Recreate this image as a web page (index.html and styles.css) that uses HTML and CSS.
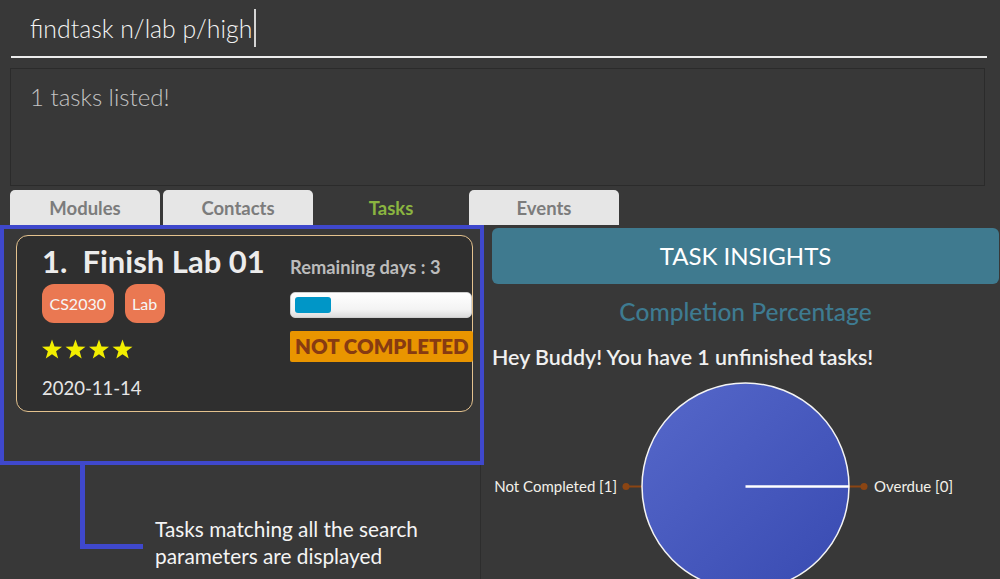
FILE: index.html
```html
<!DOCTYPE html>
<html lang="en">
<head>
<meta charset="utf-8">
<title>Task finder</title>
<link rel="stylesheet" href="styles.css">
</head>
<body>
<div class="app">
  <div class="command"><span class="cmd-text">findtask n/lab p/high</span><span class="caret"></span></div>
  <div class="result">1 tasks listed!</div>
  <nav class="tabs">
    <div class="tab">Modules</div>
    <div class="tab">Contacts</div>
    <div class="tab active">Tasks</div>
    <div class="tab">Events</div>
  </nav>
  <div class="main">
    <section class="list-pane">
      <article class="card">
        <div class="card-left">
          <h2 class="title">1.  Finish Lab 01</h2>
          <div class="tags"><span class="tag">CS2030</span><span class="tag">Lab</span></div>
          <svg class="stars" width="92" height="21" viewBox="0 0 92 21" aria-label="4 stars">
            <defs>
              <polygon id="star" points="10,0.5 12.5,7.5 20,7.8 14.1,12.3 16.2,19.5 10,15.3 3.8,19.5 5.9,12.3 0,7.8 7.5,7.5"/>
            </defs>
            <use href="#star" x="0" y="0"/>
            <use href="#star" x="23.5" y="0"/>
            <use href="#star" x="47" y="0"/>
            <use href="#star" x="70.5" y="0"/>
          </svg>
          <div class="date">2020-11-14</div>
        </div>
        <div class="card-right">
          <div class="remaining">Remaining days : 3</div>
          <div class="progress"><div class="progress-fill"></div></div>
          <div class="status">NOT COMPLETED</div>
        </div>
      </article>
      <div class="highlight"></div>
      <div class="callout-line"></div>
      <p class="callout-text">Tasks matching all the search<br>parameters are displayed</p>
    </section>
    <section class="insights">
      <div class="insights-header">TASK INSIGHTS</div>
      <h3 class="chart-title">Completion Percentage</h3>
      <p class="summary">Hey Buddy! You have 1 unfinished tasks!</p>
      <svg class="pie" width="507" height="209" viewBox="0 0 507 209">
        <defs>
          <linearGradient id="pieGrad" x1="0" y1="0" x2="1" y2="1">
            <stop offset="0" stop-color="#5668ca"/>
            <stop offset="1" stop-color="#384ab1"/>
          </linearGradient>
        </defs>
        <line x1="134" y1="116.5" x2="150" y2="116.5" stroke="#8b4513" stroke-width="2"/>
        <circle cx="134" cy="116.5" r="3.5" fill="#8b4513"/>
        <line x1="357" y1="116.5" x2="372" y2="116.5" stroke="#8b4513" stroke-width="2"/>
        <circle cx="372" cy="116.5" r="3.5" fill="#8b4513"/>
        <circle cx="253.5" cy="116.5" r="103.5" fill="url(#pieGrad)" stroke="#f4f4f4" stroke-width="1.5"/>
        <line x1="253.5" y1="116.5" x2="357" y2="116.5" stroke="#ffffff" stroke-width="2.5"/>
        <text class="pie-label" x="125" y="121.5" text-anchor="end">Not Completed [1]</text>
        <text class="pie-label" x="382" y="121.5">Overdue [0]</text>
      </svg>
    </section>
  </div>
</div>
</body>
</html>
```
FILE: styles.css
```css
* { box-sizing: border-box; }

html, body {
  margin: 0;
  padding: 0;
  width: 1000px;
  height: 579px;
  overflow: hidden;
  background: #383838;
  font-family: "Lato", "Noto Sans", sans-serif;
}

.app {
  display: flex;
  flex-direction: column;
  height: 579px;
}

.command {
  margin: 0 13px 0 11px;
  height: 58px;
  padding: 13px 0 0 19px;
  border-bottom: 2px solid #ececec;
  display: flex;
  align-items: flex-start;
}

.cmd-text {
  font-size: 24.8px;
  line-height: 31px;
  font-weight: 300;
  color: #f4f4f4;
}

.caret {
  display: block;
  width: 2px;
  height: 38px;
  margin: -4px 0 0 2px;
  background: #d4d4d4;
}

.result {
  margin: 10px 15px 0 10px;
  height: 118px;
  border: 1px solid #2b2b2b;
  padding: 13px 0 0 19px;
  font-size: 24px;
  line-height: 30px;
  font-weight: 300;
  color: #c4c4c4;
}

.tabs {
  display: flex;
  gap: 3px;
  margin-top: 4px;
  padding-left: 10px;
  height: 35px;
}

.tab {
  width: 150px;
  height: 35px;
  background: #e6e6e6;
  border-radius: 5px 5px 0 0;
  text-align: center;
  font-size: 18.5px;
  font-weight: 700;
  line-height: 36px;
  color: #7c7c7c;
}

.tab.active {
  background: transparent;
  color: #8ab440;
}

.main {
  display: flex;
  flex: 1;
  min-height: 0;
}

.list-pane {
  position: relative;
  width: 481px;
  flex: none;
  border-right: 1px solid #2d2d2d;
}

.card {
  margin: 10px 0 0 16px;
  width: 457px;
  height: 177px;
  border: 1px solid #e4c28e;
  border-radius: 12px;
  background: #2f2f2f;
  padding-left: 25px;
  display: grid;
  grid-template-columns: 248px 182px;
}

.card-left {
  padding-top: 7px;
}

.title {
  margin: 0;
  font-size: 31px;
  line-height: 37px;
  font-weight: 700;
  color: #ececec;
  white-space: pre;
}

.tags {
  display: flex;
  gap: 11px;
  margin-top: 4px;
}

.tag {
  background: #ea7852;
  color: #f6f6f6;
  font-size: 16px;
  line-height: 19px;
  padding: 10px 7.5px;
  border-radius: 12px;
}

.stars {
  display: block;
  margin-top: 16px;
  fill: #f2ee00;
}

.date {
  margin-top: 16px;
  font-size: 18.5px;
  line-height: 24px;
  color: #e6e6e6;
}

.card-right {
  padding-top: 20px;
}

.remaining {
  font-size: 18.3px;
  line-height: 22px;
  font-weight: 700;
  color: #bcbcbc;
  white-space: nowrap;
}

.progress {
  margin-top: 14px;
  width: 182px;
  height: 26px;
  border-radius: 5px;
  background: linear-gradient(#ffffff, #f3f3f3 70%, #dcdcdc);
  border: 1px solid #cfcfcf;
  padding: 4px;
}

.progress-fill {
  width: 36px;
  height: 16px;
  border-radius: 3px;
  background: #0096c7;
}

.status {
  margin-top: 13px;
  width: 183px;
  height: 31px;
  background: #e99500;
  border-radius: 2px;
  color: #873b12;
  font-size: 20.5px;
  font-weight: 800;
  line-height: 31px;
  padding-left: 5px;
  white-space: nowrap;
}

.highlight {
  position: absolute;
  left: 0;
  top: 0;
  width: 484px;
  height: 240px;
  border: 4px solid #3f48cc;
}

.callout-line {
  position: absolute;
  left: 80px;
  top: 239px;
  width: 63px;
  height: 85px;
  border-left: 5px solid #3f48cc;
  border-bottom: 5px solid #3f48cc;
}

.callout-text {
  position: absolute;
  left: 155px;
  top: 290px;
  margin: 0;
  font-size: 20.8px;
  line-height: 27px;
  color: #f4f4f4;
}

.insights {
  flex: 1;
  padding: 3px 1px 0 11px;
  min-width: 0;
}

.insights-header {
  height: 56px;
  border-radius: 6px;
  background: #3f7a8f;
  color: #ffffff;
  font-size: 24px;
  line-height: 56px;
  text-align: center;
}

.chart-title {
  margin: 13px 0 0;
  font-size: 24.5px;
  line-height: 30px;
  font-weight: 500;
  color: #3e7b91;
  text-align: center;
}

.summary {
  margin: 17px 0 0;
  font-size: 21.4px;
  line-height: 26px;
  font-weight: 600;
  color: #f0f0f0;
}

.pie {
  display: block;
}

.pie-label {
  font-family: "Lato", "Noto Sans", sans-serif;
  font-size: 15px;
  fill: #f2f0ea;
}
```
